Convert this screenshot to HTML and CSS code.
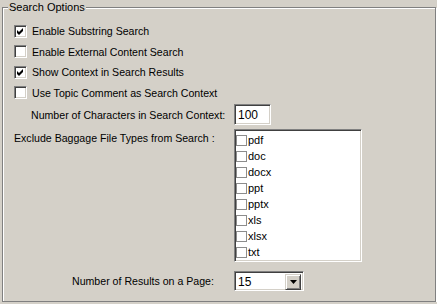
FILE: index.html
```html
<!DOCTYPE html>
<html>
<head>
    <meta charset="UTF-8">
    <title>Search Options</title>
    <link rel="stylesheet" href="styles.css">
</head>
<body>
    <fieldset class="group">
        <legend>Search Options</legend>
        <div class="check"><span class="box"><svg viewBox="0 0 9 9"><polygon points="1,3 3,5 7,1 7,4 3,8 1,6"/></svg></span>Enable Substring Search</div>
        <div class="check"><span class="box"></span>Enable External Content Search</div>
        <div class="check"><span class="box"><svg viewBox="0 0 9 9"><polygon points="1,3 3,5 7,1 7,4 3,8 1,6"/></svg></span>Show Context in Search Results</div>
        <div class="check"><span class="box"></span>Use Topic Comment as Search Context</div>

        <div class="field chars">
            <span class="lbl">Number of Characters in Search Context:</span>
            <div class="text">100</div>
        </div>

        <div class="field types">
            <span class="lbl">Exclude Baggage File Types from Search :</span>
            <ul class="list">
                <li><i></i>pdf</li>
                <li><i></i>doc</li>
                <li><i></i>docx</li>
                <li><i></i>ppt</li>
                <li><i></i>pptx</li>
                <li><i></i>xls</li>
                <li><i></i>xlsx</li>
                <li><i></i>txt</li>
            </ul>
        </div>

        <div class="field results">
            <span class="lbl">Number of Results on a Page:</span>
            <div class="combo">15<span class="drop"><svg viewBox="0 0 7 4"><polygon points="0,0 7,0 3.5,4"/></svg></span></div>
        </div>
    </fieldset>
</body>
</html>
```

FILE: styles.css
```css
*{margin: 0;padding: 0;box-sizing: border-box;list-style: none;}
body{
    background-color: #d4d0c8;
    font: 10.6px "Liberation Sans", Arial, sans-serif;
    color: #000;
}
.group{
    margin: 1px 0 0 2px;
    width: 434px;
    height: 301px;
    padding: 7px 0 0 11px;
    border: 1px solid #808080;
    box-shadow: inset 1px 1px #fff, 1px 1px #fff;
}
.group legend{
    margin-left: -6px;
    padding: 0 1px;
    line-height: 13px;
    font-size: 11px;
    background-color: #d4d0c8;
}
.check{
    display: flex;
    align-items: center;
    gap: 5px;
    height: 20.5px;
}
.box{
    width: 13px;
    height: 13px;
    padding: 2px;
    background-color: #fff;
    border: 1px solid;
    border-color: #808080 #fff #fff #808080;
    box-shadow: inset 1px 1px #404040, inset -1px -1px #d4d0c8;
}
.box svg{
    display: block;
    width: 9px;
    height: 9px;
    margin: -1px 0 0 -1px;
}
.field{
    display: grid;
    grid-template-columns: 220px auto;
    align-items: center;
}
.chars{
    height: 21px;
    margin-top: 1px;
}
.chars .lbl{
    padding-left: 17px;
}
.types{
    align-items: start;
    margin-top: 4px;
}
.types .lbl{
    padding-top: 3px;
}
.results{
    margin-top: 9px;
}
.results .lbl{
    padding-left: 58px;
}
.text,.list,.combo{
    background-color: #fff;
    border: 1px solid;
    border-color: #808080 #fff #fff #808080;
    box-shadow: inset 1px 1px #404040, inset -1px -1px #d4d0c8;
}
.text{
    width: 37px;
    height: 21px;
    padding: 3px 0 0 3px;
    font-size: 12px;
}
.list{
    width: 128px;
    height: 133px;
    padding: 2px 0 0 1px;
    font-size: 11px;
}
.list li{
    display: flex;
    align-items: center;
    gap: 1px;
    height: 16px;
}
.list i{
    width: 11px;
    height: 11px;
    border: 1px solid #8c8c8c;
    background-color: #fff;
}
.combo{
    position: relative;
    width: 70px;
    height: 20px;
    padding: 3px 0 0 3px;
    font-size: 12px;
}
.drop{
    position: absolute;
    right: 2px;
    top: 2px;
    width: 16px;
    height: 16px;
    background-color: #d4d0c8;
    border: 1px solid;
    border-color: #d4d0c8 #404040 #404040 #d4d0c8;
    box-shadow: inset 1px 1px #fff, inset -1px -1px #808080;
    display: flex;
    align-items: center;
    justify-content: center;
}
.drop svg{
    width: 7px;
    height: 4px;
    display: block;
}
```
